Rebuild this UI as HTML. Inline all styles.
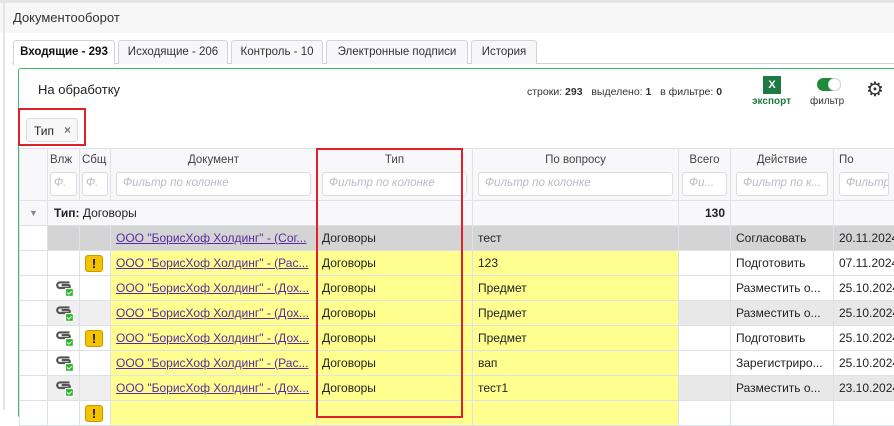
<!DOCTYPE html>
<html><head><meta charset="utf-8"><style>
*{box-sizing:border-box;margin:0;padding:0}
body{width:894px;height:410px;overflow:hidden;background:#fff;font-family:"Liberation Sans","Noto Sans CJK SC",sans-serif;font-size:12px;color:#222;position:relative}
.abs{position:absolute}
.tab{position:absolute;top:40px;height:24px;border:1px solid #cfd3dc;border-bottom:none;border-radius:3px 3px 0 0;background:#f7f7f9;font-size:11.5px;text-align:center;line-height:22px;color:#333}
table{position:absolute;left:19px;top:148px;width:875px;border-collapse:collapse;table-layout:fixed}
td,th{border:1px solid #dfe1e8;height:25px;padding:0 5px;white-space:nowrap;overflow:hidden;text-overflow:ellipsis;font-weight:normal;text-align:left}
td:last-child,th:last-child{text-overflow:clip}
th{background:#f8f8fa;color:#444;text-align:center;vertical-align:top;padding-top:5px;height:52px;font-size:11.5px}
.f{display:block;margin:6px auto 0;height:24px;border:1px solid #d9dce3;border-radius:3px;background:#fff;color:#b8bcc6;font-style:italic;font-size:11.5px;text-align:left;padding:4px 6px;overflow:hidden;white-space:nowrap}
.y{background:#ffff8f}.g{background:#d4d4d4}.s{background:#e8e8e8}.w{background:#fff}.l{background:#efefef}
a{color:#5a2aa0;text-decoration:underline}
.ex{display:inline-block;width:18px;height:17px;background:#f5c200;border:1px solid #c99a00;border-radius:3px;text-align:center;font-weight:bold;line-height:15px;font-size:13px;color:#111}
svg.c{display:block;margin-left:2px}
</style></head><body>
<svg width="0" height="0" style="position:absolute"><defs><symbol id="clip" viewBox="0 0 18 16"><path d="M13 3H4.5a2.5 2.5 0 0 0 0 5H12a1.3 1.3 0 0 0 0-2.6H6" fill="none" stroke="#555" stroke-width="2"/><rect x="9.5" y="8.5" width="7" height="7" fill="#22b822" stroke="#fff"/><path d="M11 12l1.5 1.5 2.5-2.5" stroke="#fff" fill="none" stroke-width="1"/></symbol></defs></svg>
<div class="abs" style="left:0;top:0;width:894px;height:33px;background:#f7f7f7;border-top:3px solid #e4e4e4"></div>
<div class="abs" style="left:3px;top:3px;width:2px;height:407px;background:#e4e4e4"></div>
<div class="abs" style="left:13px;top:10px;font-size:13px;color:#333">Документооборот</div>
<div class="abs" style="left:12px;top:63px;width:882px;height:1px;background:#cfd3dc"></div>
<div class="tab" style="left:13px;width:102px;background:#fff;height:25px;font-weight:bold;color:#111">Входящие - 293</div>
<div class="tab" style="left:118px;width:110px">Исходящие - 206</div>
<div class="tab" style="left:231px;width:92px">Контроль - 10</div>
<div class="tab" style="left:326px;width:142px">Электронные подписи</div>
<div class="tab" style="left:471px;width:66px">История</div>
<div class="abs" style="left:18px;top:68px;width:880px;height:350px;border:1px solid #3dba6a;border-radius:3px"></div>
<div class="abs" style="left:38px;top:82px;font-size:13px;color:#222">На обработку</div>
<div class="abs" style="left:527px;top:86px;font-size:10.5px;color:#333">строки: <b>293</b> &nbsp; выделено: <b>1</b> &nbsp; в фильтре: <b>0</b></div>
<div class="abs" style="left:763px;top:76px;width:18px;height:18px;background:#1e7a45;color:#fff;font-weight:bold;font-size:11px;text-align:center;line-height:18px">X</div>
<div class="abs" style="left:752px;top:96px;font-size:10px;color:#1e7a45;font-weight:bold">экспорт</div>
<div class="abs" style="left:817px;top:78px;width:24px;height:13px;background:#1e8a3a;border-radius:7px"><div style="position:absolute;right:0;top:0;width:13px;height:13px;border-radius:7px;background:#fff;border:1px solid #ddd"></div></div>
<div class="abs" style="left:810px;top:96px;font-size:10px;color:#333">фильтр</div>
<div class="abs" style="left:866px;top:80px;font-size:20px;color:#333;line-height:20px">⚙</div>
<div class="abs" style="left:26px;top:118px;width:52px;height:24px;border:1px solid #ddd;border-radius:3px;background:#f8f8f8;font-size:12px;padding:5px 7px;white-space:nowrap">Тип <span style="color:#777;font-weight:bold;position:absolute;left:37px;top:4px">×</span></div>
<div class="abs" style="left:18px;top:108px;width:68px;height:38px;border:2px solid #e0212a;z-index:3"></div>
<table>
<colgroup><col style="width:28px"><col style="width:32px"><col style="width:31px"><col style="width:206px"><col style="width:156px"><col style="width:206px"><col style="width:52px"><col style="width:103px"><col style="width:61px"></colgroup>
<tr><th></th><th style="padding:5px 2px 0;text-align:left">Влж<span class="f" style="padding:4px 3px">Ф.</span></th><th style="padding:5px 2px 0;text-align:left">Сбщ<span class="f" style="padding:4px 3px">Ф.</span></th><th>Документ<span class="f">Фильтр по колонке</span></th><th>Тип<span class="f">Фильтр по колонке</span></th><th>По вопросу<span class="f">Фильтр по колонке</span></th><th style="padding:5px 3px 0">Всего<span class="f">Фи...</span></th><th>Действие<span class="f">Фильтр по к...</span></th><th style="text-align:left">По<span class="f">Фильтр п</span></th></tr>
<tr style="background:#f8f8fa"><td style="color:#888;font-size:9px;text-align:center">▼</td><td colspan="4" style="font-weight:bold;padding-left:6px">Тип: <span style="font-weight:normal">Договоры</span></td><td></td><td style="text-align:right;font-weight:bold">130</td><td></td><td></td></tr>
<tr><td class="w"></td><td class="g"></td><td class="g"></td><td class="g"><a>ООО "БорисХоф Холдинг" - (Сог...</a></td><td class="g">Договоры</td><td class="g">тест</td><td class="g"></td><td class="g">Согласовать</td><td class="g">20.11.2024</td></tr>
<tr><td class="w"></td><td class="w"></td><td class="w" style="padding:0 5px"><span class="ex">!</span></td><td class="y"><a>ООО "БорисХоф Холдинг" - (Рас...</a></td><td class="y">Договоры</td><td class="y">123</td><td class="w"></td><td class="w">Подготовить</td><td class="w">07.11.2024</td></tr>
<tr><td class="w"></td><td class="w"><svg class="c" width="20" height="18"><use href="#clip"/></svg></td><td class="w"></td><td class="y"><a>ООО "БорисХоф Холдинг" - (Дох...</a></td><td class="y">Договоры</td><td class="y">Предмет</td><td class="w"></td><td class="w">Разместить о...</td><td class="w">25.10.2024</td></tr>
<tr><td class="w"></td><td class="l"><svg class="c" width="20" height="18"><use href="#clip"/></svg></td><td class="l"></td><td class="y"><a>ООО "БорисХоф Холдинг" - (Дох...</a></td><td class="y">Договоры</td><td class="y">Предмет</td><td class="s"></td><td class="s">Разместить о...</td><td class="s">25.10.2024</td></tr>
<tr><td class="w"></td><td class="w"><svg class="c" width="20" height="18"><use href="#clip"/></svg></td><td class="w" style="padding:0 5px"><span class="ex">!</span></td><td class="y"><a>ООО "БорисХоф Холдинг" - (Дох...</a></td><td class="y">Договоры</td><td class="y">Предмет</td><td class="w"></td><td class="w">Подготовить</td><td class="w">25.10.2024</td></tr>
<tr><td class="w"></td><td class="w"><svg class="c" width="20" height="18"><use href="#clip"/></svg></td><td class="w"></td><td class="y"><a>ООО "БорисХоф Холдинг" - (Рас...</a></td><td class="y">Договоры</td><td class="y">вап</td><td class="w"></td><td class="w">Зарегистриро...</td><td class="w">25.10.2024</td></tr>
<tr><td class="w"></td><td class="l"><svg class="c" width="20" height="18"><use href="#clip"/></svg></td><td class="l"></td><td class="y"><a>ООО "БорисХоф Холдинг" - (Дох...</a></td><td class="y">Договоры</td><td class="y">тест1</td><td class="s"></td><td class="s">Разместить о...</td><td class="s">23.10.2024</td></tr>
<tr><td class="w"></td><td class="w"></td><td class="w" style="padding:0 5px;vertical-align:top;padding-top:4px"><span class="ex">!</span></td><td class="y"></td><td class="y"></td><td class="y"></td><td class="w"></td><td class="w"></td><td class="w"></td></tr>
</table>
<div class="abs" style="left:316px;top:148px;width:147px;height:270px;border:2px solid #e0212a;z-index:3"></div>
</body></html>
